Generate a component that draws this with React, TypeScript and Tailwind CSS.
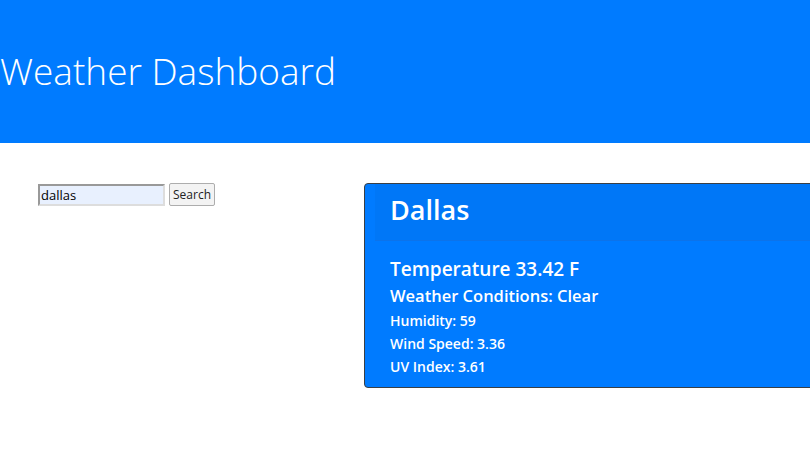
import { useState } from "react";

const font = { fontFamily: '"Open Sans", "Noto Sans", sans-serif' };

export default function App() {
  const [city, setCity] = useState("dallas");

  return (
    <div className="min-h-[455px] overflow-hidden bg-white" style={font}>
      <header className="h-[143px] bg-[#007bff] pt-[44px]">
        <h1 className="text-[37px] font-light leading-[54px] text-white">Weather Dashboard</h1>
      </header>

      <div className="flex items-start pt-[40px]">
        <div className="flex w-[364px] shrink-0 items-center gap-[4px] pl-[38px]">
          <input
            value={city}
            onChange={(e) => setCity(e.target.value)}
            className="h-[22px] w-[127px] border-2 border-t-[#999] border-l-[#999] border-r-[#ddd] border-b-[#ddd] bg-[#e8f0fe] px-[1px] text-[13px] text-black outline-none"
          />
          <button className="h-[23px] rounded-[2px] border border-[#adadad] bg-[#f3f3f3] px-[3px] text-[12px] text-[#222]">
            Search
          </button>
        </div>

        <div className="w-[480px] shrink-0 rounded-[4px] border border-[#3a3f45] bg-[#007bff] px-[10px] text-white">
          <div className="h-[57px] border-b border-[#1d6fd6]/40 bg-[#0077f7] pl-[15px] pt-[8px]">
            <h2 className="text-[27px] font-semibold leading-[36px]">Dallas</h2>
          </div>
          <div className="pl-[15px] pt-[14px] pb-[9px]">
            <h3 className="text-[19px] font-semibold leading-[28px]">Temperature 33.42 F</h3>
            <h4 className="text-[16.5px] font-semibold leading-[26px]">Weather Conditions: Clear</h4>
            <p className="text-[14px] font-semibold leading-[23px]">Humidity: 59</p>
            <p className="text-[14px] font-semibold leading-[23px]">Wind Speed: 3.36</p>
            <p className="text-[14px] font-semibold leading-[23px]">UV Index: 3.61</p>
          </div>
        </div>
      </div>
    </div>
  );
}
